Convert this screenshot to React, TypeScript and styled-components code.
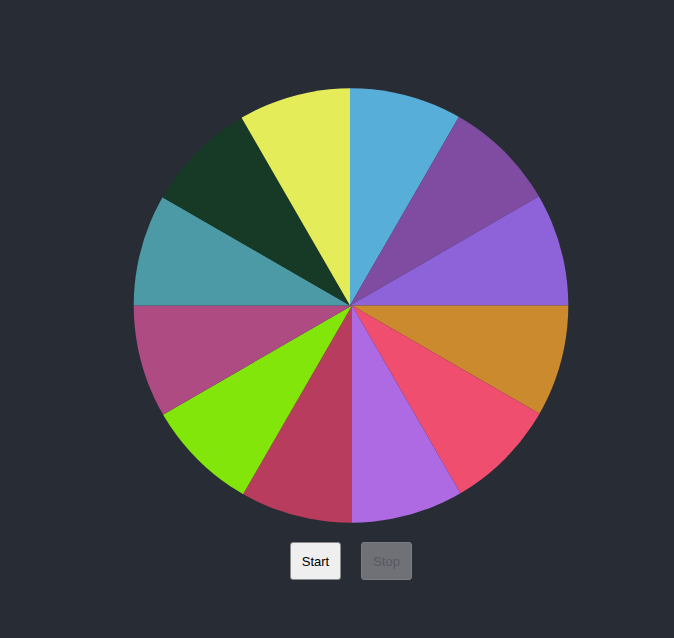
import React from "react";
import styled, { createGlobalStyle } from "styled-components";

const Global = createGlobalStyle`
  html, body { margin: 0; padding: 0; background: #282c34; }
  body { font-family: "Liberation Sans", Arial, sans-serif; }
`;

const Page = styled.div`
  min-height: 638px;
  display: flex;
  flex-direction: column;
  align-items: center;
  padding-top: 87px;
  padding-left: 28px;
  box-sizing: border-box;
`;

const WheelSvg = styled.svg`
  display: block;
  width: 436px;
  height: 437px;
`;

const Controls = styled.div`
  display: flex;
  gap: 20px;
  margin-top: 18px;
`;

const Button = styled.button`
  width: 51px;
  height: 38px;
  padding: 0;
  font-family: "Liberation Sans", Arial, sans-serif;
  font-size: 13px;
  color: #000;
  background: #efefef;
  border: 1px solid #8a8a8a;
  border-radius: 3px;
  &:disabled {
    background: #6f7177;
    color: #575a61;
    border-color: #7b7d82;
  }
`;

const COLORS = [
  "#57aed8",
  "#7f4ca2",
  "#8e63d9",
  "#cc8a2f",
  "#ef4e6f",
  "#ad6ae3",
  "#b83c5d",
  "#82e60a",
  "#ae4b83",
  "#4c9aa5",
  "#173a26",
  "#e5ec59",
];

const CX = 218;
const CY = 218.5;
const R = 217.3;

function slicePath(i: number) {
  // upper-half slices meet at a point 1px left, lower-half 1px right
  const upper = i <= 2 || i >= 9;
  const ax = upper ? CX - 1 : CX + 1;
  const big = 320;
  const a0 = ((-90 + 30 * i) * Math.PI) / 180;
  const a1 = ((-90 + 30 * (i + 1)) * Math.PI) / 180;
  const x0 = ax + big * Math.cos(a0);
  const y0 = CY + big * Math.sin(a0);
  const x1 = ax + big * Math.cos(a1);
  const y1 = CY + big * Math.sin(a1);
  return `M ${ax} ${CY} L ${x0} ${y0} L ${x1} ${y1} Z`;
}

export default function App() {
  return (
    <>
      <Global />
      <Page>
        <WheelSvg viewBox="0 0 436 437">
          <defs>
            <clipPath id="wheel-clip">
              <circle cx={CX} cy={CY} r={R} />
            </clipPath>
          </defs>
          <g clipPath="url(#wheel-clip)">
            {COLORS.map((c, i) => (
              <path key={i} d={slicePath(i)} fill={c} />
            ))}
          </g>
        </WheelSvg>
        <Controls>
          <Button>Start</Button>
          <Button disabled>Stop</Button>
        </Controls>
      </Page>
    </>
  );
}
